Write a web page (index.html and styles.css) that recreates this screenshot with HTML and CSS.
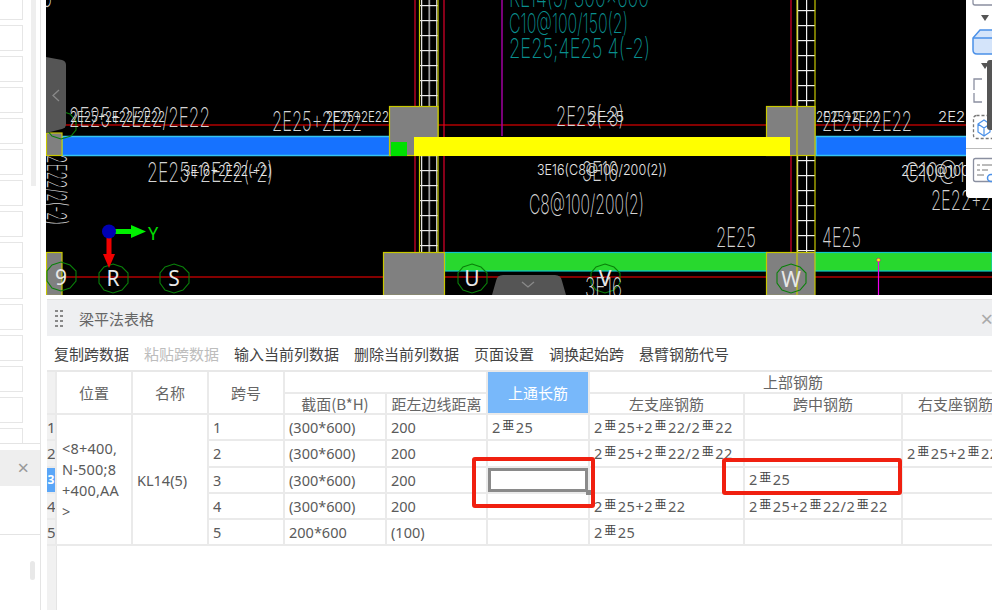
FILE: index.html
```html
<!DOCTYPE html>
<html lang="zh-CN">
<head>
    <meta charset="UTF-8">
    <meta name="viewport" content="width=device-width, initial-scale=1.0">
    <title>梁平法表格</title>
    <link rel="stylesheet" href="styles.css">
</head>
<body>

    <aside class="side">
        <div class="side-list">
            <div class="side-cards">
                <div class="card"></div><div class="card"></div><div class="card"></div>
                <div class="card"></div><div class="card"></div><div class="card"></div>
                <div class="card"></div><div class="card"></div><div class="card"></div>
                <div class="card"></div><div class="card"></div><div class="card"></div>
                <div class="card"></div><div class="card"></div><div class="card"></div>
            </div>
            <div class="side-scroll"></div>
        </div>
        <div class="side-head"><span class="side-close">&times;</span></div>
        <div class="side-body"></div>
        <div class="side-foot"><div class="side-thumb"></div></div>
    </aside>

    <main class="main">
        <svg class="cad" viewBox="46 0 946 295" width="946" height="295">
            <defs>
                <pattern id="wallA" x="421" y="5" width="7.6" height="15" patternUnits="userSpaceOnUse">
                    <rect width="1.2" height="15" fill="#e8e8e8"/>
                    <rect width="7.6" height="1.2" fill="#e8e8e8"/>
                </pattern>
                <pattern id="wallB" x="797" y="10" width="9" height="15" patternUnits="userSpaceOnUse">
                    <rect width="1.2" height="15" fill="#f0f0f0"/>
                    <rect width="9" height="1.2" fill="#f0f0f0"/>
                </pattern>
            </defs>

            <rect x="46" y="0" width="946" height="295" fill="#000"/>

            <!-- red grid lines -->
            <line x1="46" y1="125" x2="992" y2="125" class="grid"/>
            <line x1="46" y1="277" x2="992" y2="277" class="grid"/>
            <line x1="415" y1="0" x2="415" y2="252" class="grid-v"/>
            <line x1="444" y1="0" x2="444" y2="252" class="grid-v"/>
            <line x1="791" y1="0" x2="791" y2="252" class="grid-v"/>
            <line x1="502" y1="0" x2="502" y2="136" class="purple"/>

            <!-- walls -->
            <rect x="420" y="0" width="18" height="252" fill="url(#wallA)"/>
            <line x1="419.5" y1="0" x2="419.5" y2="252" class="wall-edge"/>
            <line x1="438" y1="0" x2="438" y2="252" class="wall-edge"/>
            <rect x="797" y="0" width="18" height="252" fill="url(#wallB)"/>
            <line x1="797" y1="0" x2="797" y2="252" class="wall-edge"/>
            <line x1="815" y1="0" x2="815" y2="252" class="wall-edge"/>

            <!-- beams -->
            <rect x="62" y="136.5" width="328" height="19" class="beam-blue"/>
            <rect x="816" y="136.5" width="176" height="19" class="beam-blue"/>
            <rect x="445" y="252.5" width="322" height="18.5" class="beam-green"/>
            <rect x="815" y="252.5" width="177" height="18.5" class="beam-green"/>

            <!-- columns -->
            <rect x="46.5" y="133" width="15.5" height="22.5" class="col"/>
            <rect x="389.5" y="106.5" width="48.5" height="49" class="col"/>
            <rect x="766.5" y="106.5" width="48.5" height="49" class="col"/>
            <line x1="797" y1="106" x2="797" y2="156" class="wall-edge"/>
            <rect x="46.5" y="252.5" width="15.5" height="43" class="col"/>
            <rect x="383.5" y="252.5" width="61" height="43" class="col"/>
            <rect x="766.5" y="252.5" width="48.5" height="43" class="col"/>
            <line x1="797" y1="252" x2="797" y2="295" class="wall-edge"/>

            <rect x="391" y="142" width="16" height="14" fill="#00e000"/>
            <rect x="414" y="137" width="376" height="19" fill="#ffff00"/>

            <line x1="878.5" y1="260" x2="878.5" y2="295" stroke="#f000f0" stroke-width="1.2"/>
            <circle cx="878.5" cy="260" r="1.8" fill="#ffff00" stroke="#e000a0" stroke-width=".6"/>

            <!-- axis bubbles -->
            <polygon points="61,111 70,114 76,121 76,130 71,136 61,139 52,136 47,130 47,121 52,114" class="bubble"/>
            <polygon points="61,262 70,265 76,271 76,281 70,288 61,291 52,288 47,281 47,271 52,265" class="bubble"/>
            <polygon points="113,264 122,267 128,273 128,283 122,290 113,293 104,290 99,283 99,273 104,267" class="bubble"/>
            <polygon points="174,264 183,267 189,273 189,283 183,290 174,293 165,290 160,283 160,273 165,267" class="bubble"/>
            <polygon points="472,264 481,267 487,273 487,283 481,290 472,293 463,290 458,283 458,273 463,267" class="bubble"/>
            <polygon points="605,264 614,267 620,273 620,283 614,290 605,293 596,290 591,283 591,273 596,267" class="bubble"/>
            <polygon points="791,264 800,267 806,273 806,283 800,290 791,293 782,290 777,283 777,273 782,267" class="bubble"/>
            <text x="61" y="285" class="axis-name">9</text>
            <text x="113" y="286" class="axis-name">R</text>
            <text x="174" y="286" class="axis-name">S</text>
            <text x="472" y="286" class="axis-name">U</text>
            <text x="605" y="286" class="axis-name">V</text>
            <text x="791" y="287" class="axis-name">W</text>

            <!-- coordinate gizmo -->
            <rect x="113" y="229" width="20" height="5" fill="#00f000"/>
            <polygon points="131,225 146,231.5 131,238" fill="#00f000"/>
            <rect x="106.5" y="236" width="5" height="20" fill="#f00000"/>
            <polygon points="103,254 115,254 109,268" fill="#f00000"/>
            <circle cx="109" cy="231.5" r="7" fill="#0000b4"/>
            <text x="148" y="240" class="gizmo-y">Y</text>

            <!-- cad annotations -->
            <text x="69" y="127" class="cad-big" textLength="141" lengthAdjust="spacingAndGlyphs">2E25+2E22/2E22</text>
            <text x="70" y="122" class="cad-small" textLength="95" lengthAdjust="spacingAndGlyphs">2E25+2E22/2E22</text>
            <text x="272" y="131" class="cad-big" textLength="90" lengthAdjust="spacingAndGlyphs">2E25+2E22</text>
            <text x="326" y="122" class="cad-small" textLength="63" lengthAdjust="spacingAndGlyphs">2E25+2E22</text>
            <text x="147" y="182" class="cad-big" textLength="126" lengthAdjust="spacingAndGlyphs">2E25+2E22(-2)</text>
            <text x="183" y="176" class="cad-small" textLength="89" lengthAdjust="spacingAndGlyphs">3E16+2E22(+2)</text>
            <text x="556" y="126" class="cad-big" textLength="68" lengthAdjust="spacingAndGlyphs">2E25(-3)</text>
            <text x="588" y="122" class="cad-small" textLength="36" lengthAdjust="spacingAndGlyphs">2E25</text>
            <text x="537" y="175" class="cad-small" textLength="130" lengthAdjust="spacingAndGlyphs">3E16(C8@100/200(2))</text>
            <text x="582" y="181" class="cad-big" textLength="36" lengthAdjust="spacingAndGlyphs">3E16</text>
            <text x="529" y="214" class="cad-big" textLength="115" lengthAdjust="spacingAndGlyphs">C8@100/200(2)</text>
            <text x="716" y="247" class="cad-big" textLength="40" lengthAdjust="spacingAndGlyphs">2E25</text>
            <text x="822" y="247" class="cad-big" textLength="39" lengthAdjust="spacingAndGlyphs">4E25</text>
            <text x="822" y="131" class="cad-big" textLength="90" lengthAdjust="spacingAndGlyphs">2E25+2E22</text>
            <text x="816" y="122" class="cad-small" textLength="64" lengthAdjust="spacingAndGlyphs">2E25+2E22</text>
            <text x="938" y="122" class="cad-small" textLength="36" lengthAdjust="spacingAndGlyphs">2E25</text>
            <text x="905" y="182" class="cad-big" textLength="90" lengthAdjust="spacingAndGlyphs">C10@100/</text>
            <text x="901" y="176" class="cad-small" textLength="90" lengthAdjust="spacingAndGlyphs">2E20@100/20</text>
            <text x="931" y="210" class="cad-big" textLength="90" lengthAdjust="spacingAndGlyphs">2E22+2E22</text>
            <text x="585" y="297" class="cad-big" textLength="37" lengthAdjust="spacingAndGlyphs">3E16</text>
            <text transform="translate(47 155) rotate(90)" class="cad-big" textLength="70" lengthAdjust="spacingAndGlyphs">2E22/2(-2)</text>
            <text x="12" y="7" class="cad-big" textLength="40" lengthAdjust="spacingAndGlyphs">2E25</text>

            <text x="509" y="7" class="cad-teal" textLength="140" lengthAdjust="spacingAndGlyphs">KL14(5) 300x600</text>
            <text x="509" y="33" class="cad-teal" textLength="119" lengthAdjust="spacingAndGlyphs">C10@100/150(2)</text>
            <text x="509" y="58" class="cad-teal" textLength="141" lengthAdjust="spacingAndGlyphs">2E25;4E25 4(-2)</text>

            <!-- collapse handles -->
            <path d="M46 57 L62 60 Q66 61 66 65 L66 124 Q66 128 62 129 L46 133 Z" fill="#555"/>
            <polyline points="59,90 53,95.5 59,101" class="chevron"/>
            <path d="M492 295 L496 281 Q497 275 503 275 L555 275 Q561 275 562 281 L566 295 Z" fill="#555"/>
            <polyline points="522,282 528,287 534,282" class="chevron"/>

            <!-- right tool strip -->
            <path d="M966 0 H992 V198 H970 Q966 198 966 194 Z" fill="#fff"/>
            <rect x="973" y="-8" width="24" height="13" rx="2" class="tool-line"/>
            <polygon points="981,15 989,15 985,21" fill="#555"/>
            <path d="M973 50 V38 L980 30 H996 V54 H977 Q973 54 973 50 Z" fill="#d4e4fa" stroke="#4a90e8" stroke-width="1.5"/>
            <path d="M973 38 H996" stroke="#4a90e8" stroke-width="1.5"/>
            <polygon points="981,63 989,63 985,69" fill="#555"/>
            <path d="M982 79 H974 V90 M974 93 V102 H982" class="tool-line"/>
            <rect x="973.5" y="115.5" width="24" height="23" rx="3" class="tool-dash"/>
            <path d="M978 124 L984 120 L990 124 V132 L984 136 L978 132 Z M978 124 L984 128 L990 124 M984 128 V136" fill="none" stroke="#4a90e8" stroke-width="1.2"/>
            <line x1="966" y1="148.5" x2="992" y2="148.5" stroke="#bbb"/>
            <rect x="973.5" y="158.5" width="24" height="23" rx="2" class="tool-line"/>
            <path d="M977 165 H980 M982 165 H992 M977 170 H980 M982 170 H988 M977 175 H984" stroke="#777" fill="none"/>
            <circle cx="991" cy="178" r="3.5" fill="none" stroke="#4a90e8" stroke-width="1.5"/>
            <rect x="987" y="60" width="8" height="70" rx="3" fill="#555"/>
        </svg>

        <section class="panel">
            <header class="panel-head">
                <span class="drag-dots"><i></i><i></i><i></i><i></i><i></i><i></i><i></i><i></i></span>
                <span class="panel-title">梁平法表格</span>
                <span class="panel-close">&times;</span>
            </header>
            <nav class="toolbar">
                <a>复制跨数据</a>
                <a class="disabled">粘贴跨数据</a>
                <a>输入当前列数据</a>
                <a>删除当前列数据</a>
                <a>页面设置</a>
                <a>调换起始跨</a>
                <a>悬臂钢筋代号</a>
            </nav>
            <div class="grid-wrap">
                <table class="beam-table">
                    <colgroup>
                        <col class="c-row"><col class="c-pos"><col class="c-pos"><col class="c-pos">
                        <col class="c-sec"><col class="c-dist"><col class="c-top">
                        <col class="c-left"><col class="c-mid"><col class="c-right">
                    </colgroup>
                    <thead>
                        <tr class="head-a">
                            <th class="row-no" rowspan="2"></th>
                            <th rowspan="2">位置</th>
                            <th rowspan="2">名称</th>
                            <th rowspan="2">跨号</th>
                            <th colspan="2"></th>
                            <th class="picked" rowspan="2">上通长筋</th>
                            <th colspan="3" class="group-title">上部钢筋</th>
                        </tr>
                        <tr class="head-b">
                            <th>截面(B*H)</th>
                            <th>距左边线距离</th>
                            <th>左支座钢筋</th>
                            <th>跨中钢筋</th>
                            <th>右支座钢筋</th>
                        </tr>
                    </thead>
                    <tbody>
                        <tr>
                            <td class="row-no">1</td>
                            <td rowspan="5" class="pos-cell">&lt;8+400,<br>N-500;8<br>+400,AA<br>&gt;</td>
                            <td rowspan="5">KL14(5)</td>
                            <td>1</td>
                            <td>(300*600)</td>
                            <td>200</td>
                            <td class="bars">2<span class="rebar">亜</span>25</td>
                            <td class="bars">2<span class="rebar">亜</span>25+2<span class="rebar">亜</span>22/2<span class="rebar">亜</span>22</td>
                            <td></td>
                            <td></td>
                        </tr>
                        <tr>
                            <td class="row-no">2</td>
                            <td>2</td>
                            <td>(300*600)</td>
                            <td>200</td>
                            <td></td>
                            <td class="bars">2<span class="rebar">亜</span>25+2<span class="rebar">亜</span>22/2<span class="rebar">亜</span>22</td>
                            <td></td>
                            <td class="bars">2<span class="rebar">亜</span>25+2<span class="rebar">亜</span>22/2<span class="rebar">亜</span>22</td>
                        </tr>
                        <tr>
                            <td class="row-no row-on">3</td>
                            <td>3</td>
                            <td>(300*600)</td>
                            <td>200</td>
                            <td class="cell-on"></td>
                            <td></td>
                            <td class="bars">2<span class="rebar">亜</span>25</td>
                            <td></td>
                        </tr>
                        <tr>
                            <td class="row-no">4</td>
                            <td>4</td>
                            <td>(300*600)</td>
                            <td>200</td>
                            <td></td>
                            <td class="bars">2<span class="rebar">亜</span>25+2<span class="rebar">亜</span>22</td>
                            <td class="bars">2<span class="rebar">亜</span>25+2<span class="rebar">亜</span>22/2<span class="rebar">亜</span>22</td>
                            <td></td>
                        </tr>
                        <tr>
                            <td class="row-no">5</td>
                            <td>5</td>
                            <td>200*600</td>
                            <td>(100)</td>
                            <td></td>
                            <td class="bars">2<span class="rebar">亜</span>25</td>
                            <td></td>
                            <td></td>
                        </tr>
                    </tbody>
                </table>
                <div class="mark mark-a"></div>
                <div class="mark mark-b"></div>
                <div class="row-rest"></div>
            </div>
        </section>
    </main>

</body>
</html>
```

FILE: styles.css
```css
body {
    margin: 0;
    width: 992px;
    height: 610px;
    overflow: hidden;
    display: flex;
    background: #fff;
    color: #555;
    font-family: "Noto Sans", "Noto Sans CJK SC", sans-serif;
}

/* left project list */
.side {
    width: 40px;
    flex: none;
    border-right: 1px solid #e4e4e4;
    display: flex;
    flex-direction: column;
}

.side-list {
    height: 443px;
    flex: none;
    display: flex;
    overflow: hidden;
    border-bottom: 1px solid #e4e4e4;
}

.side-cards {
    width: 23px;
    margin-top: -6px;
    flex: none;
}

.card {
    height: 24px;
    margin-bottom: 5px;
    border: 1px solid #e6e6e6;
    border-left: none;
}

.side-scroll {
    width: 5px;
    height: 186px;
    margin-left: 8px;
    background: #eee;
}

.side-head {
    height: 36px;
    margin-top: 6px;
    flex: none;
    background: #eeeeee;
    display: flex;
    align-items: center;
    justify-content: flex-end;
    padding-right: 11px;
}

.side-close {
    color: #999;
    font-size: 20px;
    line-height: 1;
}

.side-body {
    height: 48px;
    flex: none;
    border-bottom: 1px solid #e4e4e4;
}

.side-foot {
    flex: 1;
    padding: 26px 0 0 30px;
}

.side-thumb {
    width: 5px;
    height: 19px;
    background: #e8e8e8;
    border-radius: 3px;
}

/* main column */
.main {
    flex: 1;
    min-width: 0;
    padding-left: 5px;
    display: flex;
    flex-direction: column;
}

.cad {
    display: block;
    flex: none;
}

.grid { stroke: #b00000; stroke-width: 1.4; }
.grid-v { stroke: #e0002a; stroke-width: 1.2; }
.purple { stroke: #a000a0; stroke-width: 1.5; }
.wall-edge { stroke: #c8c800; stroke-width: 1.2; }
.beam-blue { fill: #1672ff; stroke: #35c4f0; stroke-width: 1.5; }
.beam-green { fill: #28d82e; stroke: #10c8c8; stroke-width: 1.2; }
.col { fill: #808080; stroke: #c8c800; stroke-width: 1.2; }
.bubble { fill: none; stroke: #0a800a; stroke-width: 1.1; }
.chevron { fill: none; stroke: #8a8a8a; stroke-width: 1.3; }

.axis-name {
    fill: #e8e8e8;
    font: 400 21px "Noto Sans", sans-serif;
    text-anchor: middle;
}

.gizmo-y {
    fill: #00e000;
    font: 400 18px "Noto Sans", sans-serif;
}

.cad-big {
    fill: #d4d4d4;
    font: 200 27px "Inter", sans-serif;
}

.cad-small {
    fill: #e6e6e6;
    font: 300 15px "Inter", sans-serif;
}

.cad-teal {
    fill: #0a8f8f;
    font: 200 27px "Inter", sans-serif;
}

.tool-line { fill: none; stroke: #8a8fa0; stroke-width: 1.3; }
.tool-dash { fill: none; stroke: #777; stroke-width: 1.3; stroke-dasharray: 3 2; }

/* bottom panel */
.panel {
    margin: 4px 0 0 1px;
    flex: 1;
    min-height: 0;
    border-top: 1px solid #e2e2e2;
    display: flex;
    flex-direction: column;
    overflow: hidden;
}

.panel-head {
    height: 36px;
    flex: none;
    background: #eeeff1;
    display: flex;
    align-items: center;
    padding-left: 8px;
}

.drag-dots {
    width: 8px;
    display: grid;
    grid-template-columns: 3px 3px;
    gap: 3px 2px;
}

.drag-dots i {
    width: 3px;
    height: 2px;
    background: #888;
}

.panel-title {
    margin-left: 16px;
    font-size: 15px;
    color: #666;
}

.panel-close {
    margin-left: auto;
    margin-right: -1px;
    color: #aaa;
    font-size: 22px;
    line-height: 1;
}

.toolbar {
    height: 34px;
    flex: none;
    display: flex;
    align-items: center;
    gap: 15px;
    padding-left: 7px;
    font-size: 15px;
    color: #444;
    font-family: "Noto Sans CJK SC", sans-serif;
}

.toolbar .disabled {
    color: #bdbdbd;
}

.grid-wrap {
    position: relative;
    flex: 1;
    min-height: 0;
}

.beam-table {
    table-layout: fixed;
    border-collapse: separate;
    border-spacing: 0;
    width: 963px;
    border-top: 2px solid #e8e8e8;
    font-size: 14.5px;
    color: #5a5a5a;
}

.c-row { width: 10px; }
.c-pos { width: 76px; }
.c-sec { width: 102px; }
.c-dist { width: 101px; }
.c-top { width: 102px; }
.c-left { width: 155px; }
.c-mid { width: 158px; }
.c-right { width: 107px; }

.beam-table th, .beam-table td {
    padding: 0 0 0 4px;
    border-right: 2px solid #eaeaea;
    border-bottom: 2px solid #eaeaea;
    box-sizing: border-box;
    white-space: nowrap;
    overflow: hidden;
}

.beam-table th {
    padding: 0;
    font-size: 15px;
    font-weight: 400;
    text-align: center;
    color: #666;
    font-family: "Noto Sans CJK SC", sans-serif;
}

.head-a th { height: 20px; line-height: 20px; }
.head-b th { height: 21px; line-height: 19px; }
.head-a th[rowspan] { line-height: 38px; }
.beam-table td { height: 26.3px; line-height: 22px; }

.beam-table .row-no {
    padding: 0;
    background: #f1f1f1;
    text-align: center;
    font-size: 15px;
}

.beam-table .row-on {
    background: #5aa6f8;
    color: #fff;
    font-size: 12px;
    font-weight: 700;
}

.beam-table .picked {
    background: #78b8fa;
    color: #fff;
}

.beam-table .group-title {
    padding-right: 12px;
}

.beam-table .pos-cell {
    white-space: normal;
    line-height: 21px;
    padding-left: 5px;
    letter-spacing: .2px;
}

.beam-table .bars {
    letter-spacing: .5px;
}

.rebar {
    font-family: "Noto Sans CJK SC", sans-serif;
    font-size: 12px;
    letter-spacing: 0;
    margin: 0 1.5px;
    color: #444;
    position: relative;
    top: -3px;
}

.beam-table .cell-on {
    position: relative;
    overflow: visible;
    box-shadow: inset 0 0 0 3px #8a8a8a;
}

.beam-table .cell-on::after {
    content: "";
    position: absolute;
    right: -3px;
    bottom: -3px;
    width: 5px;
    height: 5px;
    background: #8a8a8a;
}

/* hand drawn red boxes over the sheet */
.mark {
    position: absolute;
    box-sizing: border-box;
    border: 4px solid #f02010;
    border-radius: 3px;
}

.mark-a {
    left: 425px;
    top: 87px;
    width: 123px;
    height: 51px;
}

.mark-b {
    left: 675px;
    top: 88px;
    width: 180px;
    height: 37px;
}

.row-rest {
    box-sizing: border-box;
    width: 10px;
    height: 70px;
    background: #f1f1f1;
    border-right: 1px solid #e4e4e4;
}
```
